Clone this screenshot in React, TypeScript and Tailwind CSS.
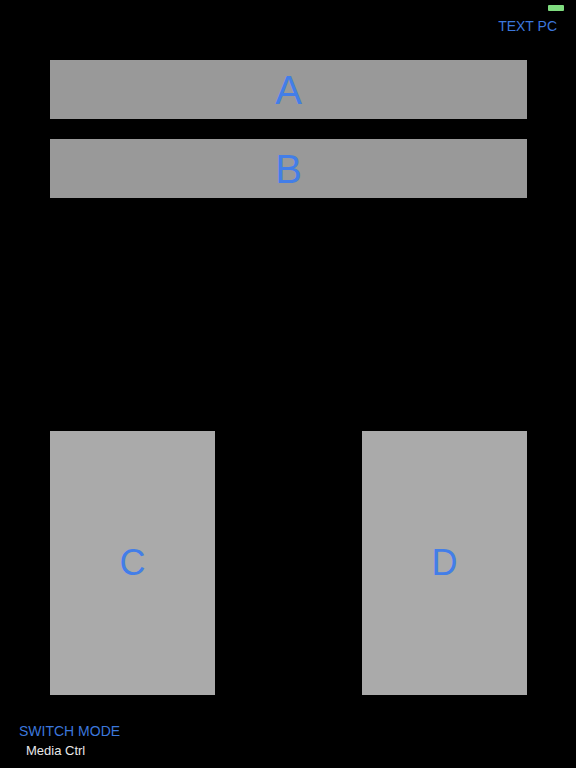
export default function App() {
  return (
    <div
      className="relative flex h-[768px] w-full flex-col bg-black"
      style={{ fontFamily: '"Liberation Sans", Arial, sans-serif' }}
    >
      {/* status bar battery */}
      <div className="absolute right-[12px] top-[5px] h-[6px] w-[16px] rounded-[1px] bg-[#7fdc7f]" />

      <div className="flex justify-end pr-[19px] pt-[18px]">
        <span className="text-[14px] leading-[16px] text-[#3c77dc]">TEXT PC</span>
      </div>

      <div className="ml-[50px] mt-[26px] flex w-[477px] flex-col gap-[20px]">
        <div className="flex h-[59px] items-center justify-center bg-[#999999] text-[40px] leading-none text-[#437ee8]">
          A
        </div>
        <div className="flex h-[59px] items-center justify-center bg-[#999999] text-[40px] leading-none text-[#437ee8]">
          B
        </div>
      </div>

      <div className="ml-[50px] mt-[233px] flex w-[477px] justify-between">
        <div className="flex h-[264px] w-[165px] items-center justify-center bg-[#aaaaaa] text-[36px] leading-none text-[#437ee8]">
          C
        </div>
        <div className="flex h-[264px] w-[165px] items-center justify-center bg-[#aaaaaa] text-[36px] leading-none text-[#437ee8]">
          D
        </div>
      </div>

      <div className="mt-[28px] flex flex-col gap-[4px]">
        <span className="pl-[19px] text-[14px] leading-[16px] text-[#3c77dc]">SWITCH MODE</span>
        <span className="pl-[26px] text-[13px] leading-[15px] text-[#e8e8e8]">Media Ctrl</span>
      </div>
    </div>
  );
}
